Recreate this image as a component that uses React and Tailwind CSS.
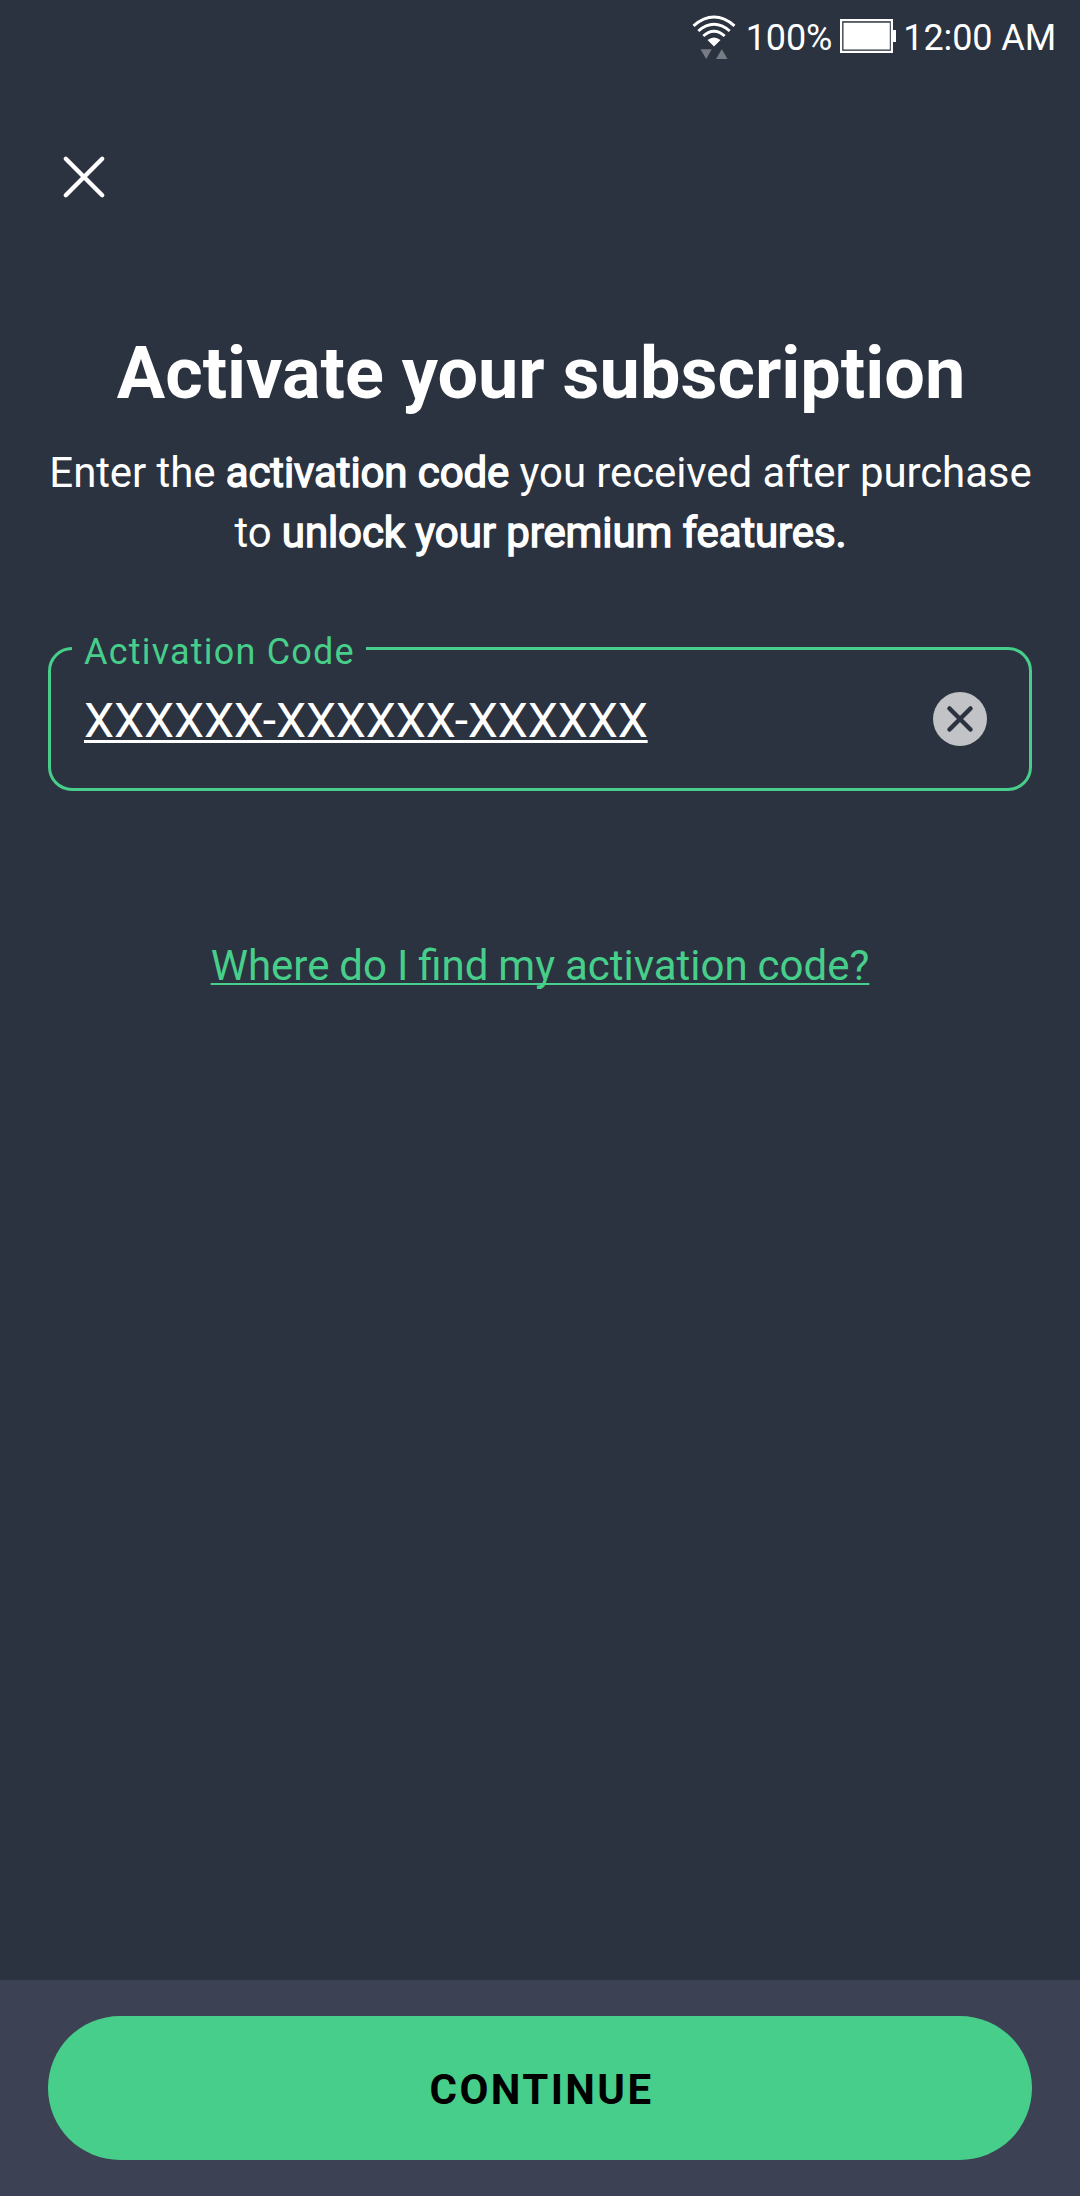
import { useState } from "react";

function WifiIcon() {
  return (
    <svg width="44" height="46" viewBox="692 15 44 46" fill="none">
      <g stroke="#fff" strokeWidth="2.9">
        <path d="M693.5 25.8 Q714 8.4 734.5 25.8" />
        <path d="M698.3 31 Q714 17.6 729.7 31" />
        <path d="M703.3 36 Q714 26.6 724.7 36" />
      </g>
      <path d="M707.5 40 Q714 34.8 720.5 40 L714 46.5 Z" fill="#fff" />
      <path d="M700.5 49.2h11.3l-5.6 9.8zM716 59h11.6l-5.8-9.8z" fill="#777b84" />
    </svg>
  );
}

function BatteryIcon() {
  return (
    <svg width="56" height="34" viewBox="0 0 56 34" fill="none">
      <rect x="1.1" y="1.1" width="50.8" height="31.8" stroke="#fff" strokeWidth="2.2" />
      <rect x="3.5" y="3.7" width="46.3" height="26.8" fill="#fff" />
      <rect x="52" y="11" width="4" height="12" fill="#fff" />
    </svg>
  );
}

function StatusBar() {
  return (
    <div className="flex h-[72px] items-center justify-end pr-6 text-4xl leading-[42px] tracking-[-0.1px]">
      <span className="pt-[3px]">
        <WifiIcon />
      </span>
      <span className="ml-[10px] pt-[3px]">100%</span>
      <span className="ml-2 mr-[7px]">
        <BatteryIcon />
      </span>
      <span className="pt-[3px]">12:00 AM</span>
    </div>
  );
}

export default function App() {
  const [code, setCode] = useState("XXXXXX-XXXXXX-XXXXXX");

  return (
    <div className="flex h-[2196px] w-[1080px] flex-col bg-[#2b3240] font-[Roboto,sans-serif] text-white">
      <StatusBar />

      <button className="ml-[60px] mt-[81px] size-12" aria-label="Close">
        <svg width="48" height="48" viewBox="0 0 48 48">
          <path
            d="M5.8 5.8l36.4 36.4M42.2 5.8L5.8 42.2"
            stroke="#fff"
            strokeWidth="4.4"
            strokeLinecap="round"
          />
        </svg>
      </button>

      <main className="flex flex-1 flex-col px-12 pt-[131px] text-center">
        <h1 className="pl-[2px] text-7xl font-bold leading-[84px]">
          Activate your subscription
        </h1>
        <p className="-mx-6 mt-[27px] pl-px text-[42px] leading-[60px] tracking-[-0.1px]">
          Enter the{" "}
          <span className="[-webkit-text-stroke:1.4px_white]">
            activation code
          </span>{" "}
          you received after purchase
          <br />
          to{" "}
          <span className="[-webkit-text-stroke:1.4px_white]">
            unlock your premium features.
          </span>
        </p>

        <fieldset className="mt-[61px] h-[167px] rounded-3xl border-[3px] border-[#47ce8a] pl-[21px] text-left">
          <legend className="w-[294px] whitespace-nowrap px-3 pt-[7px] text-4xl leading-[42px] tracking-[1.2px] text-[#47ce8a]">
            Activation Code
          </legend>
          <div className="flex items-center justify-between pl-3 pr-[42px] pt-[14px]">
            <span className="pt-1 text-5xl leading-[60px] tracking-[-0.12px] underline decoration-[3px] underline-offset-[3px]">
              {code}
            </span>
            <button
              className="size-[54px]"
              onClick={() => setCode("")}
              aria-label="Clear"
            >
              <svg width="54" height="54" viewBox="0 0 54 54">
                <circle cx="27" cy="27" r="27" fill="#c1c3c6" />
                <path
                  d="M16.5 16.5l21 21M37.5 16.5l-21 21"
                  stroke="#2b3240"
                  strokeWidth="4.5"
                  strokeLinecap="round"
                />
              </svg>
            </button>
          </div>
        </fieldset>

        <a
          href="#"
          className="mt-[145px] text-[42px] leading-[60px] text-[#47ce8a] underline decoration-2 underline-offset-[3px] [text-decoration-skip-ink:none] [word-spacing:-0.5px]"
        >
          Where do I find my activation code?
        </a>
      </main>

      <footer className="h-[216px] bg-[#3c4153] px-12 py-9">
        <button className="h-36 w-full rounded-full bg-[#47ce8a] pt-[2px] pl-[3px] text-[42px] font-bold tracking-[2.4px] text-black">
          CONTINUE
        </button>
      </footer>
    </div>
  );
}
